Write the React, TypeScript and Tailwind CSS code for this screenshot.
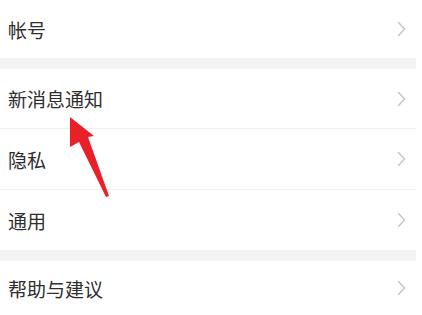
import React from "react";

const Chevron = () => (
  <svg width="9" height="16" viewBox="0 0 9 16" className="shrink-0">
    <path d="M1.5 1.5 L7.5 8 L1.5 14.5" fill="none" stroke="#c4c4c4" strokeWidth="1.4" strokeLinecap="round" strokeLinejoin="round" />
  </svg>
);

const Row = ({ label, h, divider }: { label: string; h: string; divider?: boolean }) => (
  <div className={`flex items-center justify-between pl-[8px] pr-[10px] ${h} ${divider ? "border-b border-[#f0f0f0]" : ""}`}>
    <span className="text-[19px] text-[#2e2e2e] leading-none">{label}</span>
    <Chevron />
  </div>
);

export default function App() {
  return (
    <div
      className="relative w-[422px] h-[315px] bg-white overflow-hidden"
      style={{ fontFamily: '"Noto Sans CJK SC", "Noto Sans", sans-serif' }}
    >
      <div className="w-[416px] flex flex-col">
        <Row label="帐号" h="h-[58px]" />
        <div className="h-[11px] bg-[#f2f3f4]" />
        <Row label="新消息通知" h="h-[60px]" divider />
        <Row label="隐私" h="h-[61px]" divider />
        <Row label="通用" h="h-[60px]" />
        <div className="h-[11px] bg-[#f2f3f4]" />
        <Row label="帮助与建议" h="h-[54px]" />
      </div>
      <svg className="absolute left-0 top-0" width="422" height="315" viewBox="0 0 422 315">
        <polygon
          points="70,117 94,136 88,137 109,196 106,197 79,142 70,147"
          fill="#e8202a"
        />
      </svg>
    </div>
  );
}
